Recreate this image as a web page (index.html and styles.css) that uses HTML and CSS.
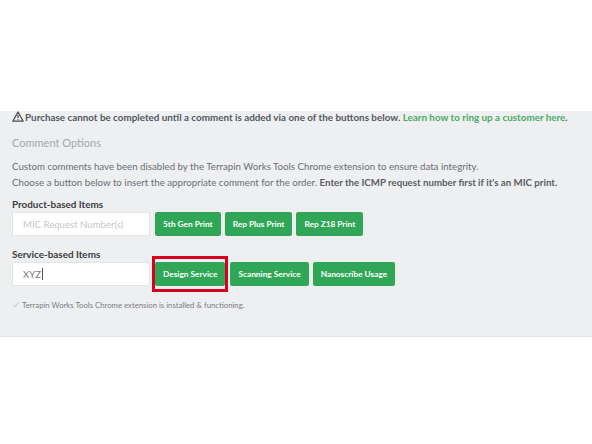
FILE: index.html
```html
<!DOCTYPE html>
<html>
<head>
<meta charset="utf-8">
<link rel="stylesheet" href="styles.css">
</head>
<body>
<div class="top"></div>
<div class="panel">
  <p class="warn"><svg class="warn-icon" width="12" height="11" viewBox="0 0 12 11"><path d="M6 1 L11.2 10.2 L0.8 10.2 Z" fill="none" stroke="#4a4e54" stroke-width="1.3" stroke-linejoin="round"/><path d="M6 4 V7" stroke="#4a4e54" stroke-width="1.3"/><circle cx="6" cy="8.6" r="0.7" fill="#4a4e54"/></svg>Purchase cannot be completed until a comment is added via one of the buttons below. <a class="link">Learn how to ring up a customer here</a>.</p>
  <h3 class="options">Comment Options</h3>
  <p class="body">Custom comments have been disabled by the Terrapin Works Tools Chrome extension to ensure data integrity.<br>Choose a button below to insert the appropriate comment for the order. <b>Enter the ICMP request number first if it's an MIC print.</b></p>
  <div class="group">
    <div class="label">Product-based Items</div>
    <div class="row">
      <div class="input placeholder">MIC Request Number(s)</div>
      <button class="btn">5th Gen Print</button>
      <button class="btn">Rep Plus Print</button>
      <button class="btn">Rep Z18 Print</button>
    </div>
  </div>
  <div class="group g2">
    <div class="label">Service-based Items</div>
    <div class="row">
      <div class="input">XYZ<span class="caret"></span></div>
      <button class="btn marked">Design Service</button>
      <button class="btn">Scanning Service</button>
      <button class="btn">Nanoscribe Usage</button>
    </div>
  </div>
  <p class="note"><svg class="check" width="8" height="7" viewBox="0 0 8 7"><path d="M1 3.8 L3 5.8 L7 1.2" fill="none" stroke="#d2d5d8" stroke-width="1.4"/></svg>Terrapin Works Tools Chrome extension is installed &amp; functioning.</p>
</div>
</body>
</html>
```
FILE: styles.css
```css
body {
  margin: 0;
  background: #fff;
  font-family: Lato, "Open Sans", sans-serif;
}
.top { height: 111px; }
.panel {
  background: #eeeff1;
  height: 226px;
  padding: 0 12px;
  box-sizing: border-box;
  border-bottom: 1px solid #e4e5e7;
}
p, h3 { margin: 0; }
.warn {
  font-size: 9.85px;
  line-height: 13px;
  font-weight: bold;
  color: #54585e;
  white-space: nowrap;
}
.warn-icon { vertical-align: -1px; margin-right: 1px; }
.link { color: #4caa68; }
.options {
  font-size: 11px;
  font-weight: normal;
  color: #a4a8ac;
  margin-top: 11px;
  line-height: 16px;
}
.body {
  margin-top: 7px;
  font-size: 9.7px;
  line-height: 16px;
  color: #6a6e73;
  white-space: nowrap;
}
.body b { color: #5a5e63; }
.group { margin-top: 8px; }
.g2 { margin-top: 12px; }
.label {
  font-size: 9.9px;
  font-weight: bold;
  color: #3a3d40;
  line-height: 12px;
  margin-bottom: 2px;
}
.row { display: flex; gap: 4px; align-items: center; }
.input {
  width: 138px;
  height: 24px;
  box-sizing: border-box;
  background: #fff;
  border: 1px solid #e2e4e6;
  font-size: 9.6px;
  padding-left: 10px;
  color: #777;
  margin-right: 1px;
  display: flex;
  align-items: center;
}
.placeholder { color: #c4c7ca; }
.caret { display: inline-block; width: 1px; height: 12px; background: #555; margin-left: 1px; }
.btn {
  height: 24px;
  border: 0;
  border-radius: 2px;
  background: #30a756;
  color: #fff;
  font-family: inherit;
  font-size: 8.3px;
  font-weight: bold;
  padding: 0 8px;
}
.marked { position: relative; margin-right: 1px; }
.marked::after {
  content: "";
  position: absolute;
  top: -6px;
  bottom: -6px;
  left: -3px;
  right: -3px;
  border: 3px solid #d8001e;
}
.note {
  margin-top: 13px;
  font-size: 7.75px;
  color: #7a7e82;
  line-height: 12px;
}
.check { margin-right: 2px; vertical-align: 0; }
```
